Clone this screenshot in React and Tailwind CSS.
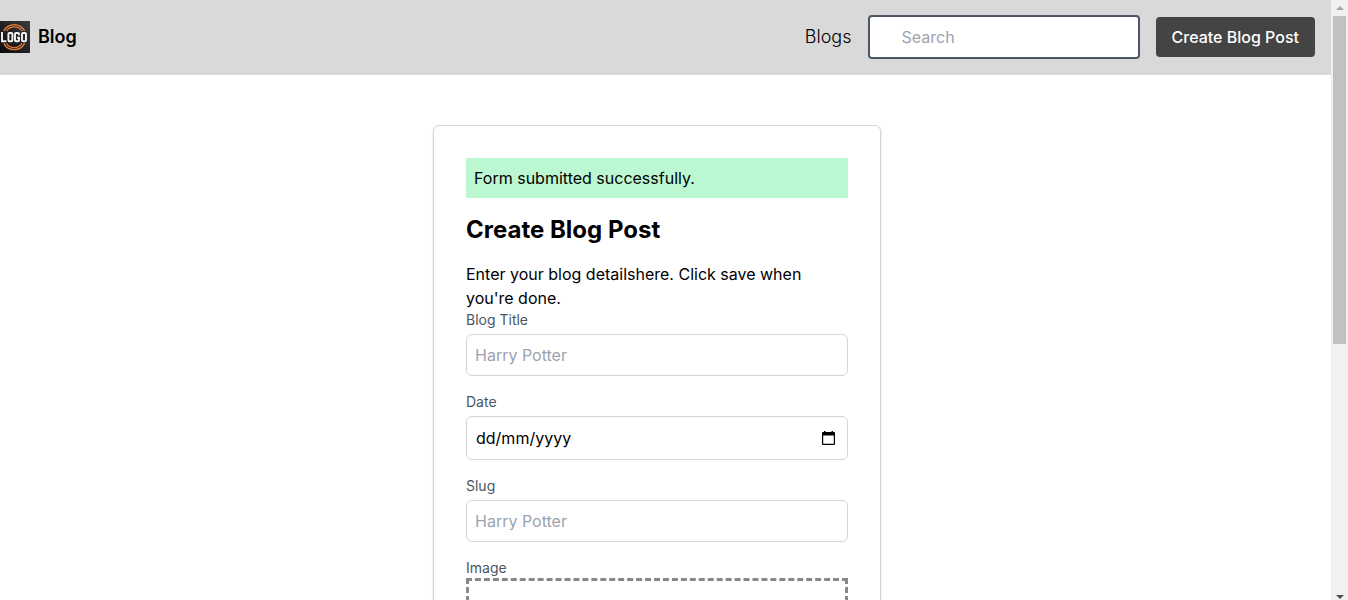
function Logo() {
  return (
    <svg viewBox="0 0 30 32" className="h-8 w-[30px]" role="img" aria-label="Blog logo">
      <defs>
        <linearGradient id="logo-bg" x1="1" y1="0" x2="0" y2="1">
          <stop offset="0" stopColor="#3b3b3e" />
          <stop offset="1" stopColor="#0b0b0d" />
        </linearGradient>
      </defs>
      <rect width="30" height="32" fill="url(#logo-bg)" />
      <g fill="none" stroke="#e07a3c">
        <path d="M3.8 10A11.8 11.8 0 0 1 24.6 10" strokeWidth="1.4" />
        <path d="M6.4 10A9.4 9.4 0 0 1 22 10" strokeWidth="1.2" />
        <path d="M3.8 22.4A11.8 11.8 0 0 0 24.6 22.4" strokeWidth="1.4" />
        <path d="M6.4 22.4A9.4 9.4 0 0 0 22 22.4" strokeWidth="1.2" />
      </g>
      <g fill="none" stroke="#f4f4f4" strokeWidth="1.9">
        <path d="M2 11V20.3H6.4" />
        <rect x="8.4" y="12" width="4" height="8.3" rx="1" />
        <path d="M19 14.2V13Q19 12 18 12H16Q15 12 15 13V19.3Q15 20.3 16 20.3H18Q19 20.3 19 19.3V16.7H17.2" />
        <rect x="22" y="12" width="4" height="8.3" rx="1" />
      </g>
    </svg>
  );
}

function Navbar() {
  return (
    <header className="flex h-[75px] items-center justify-between bg-[#d9d9d9] pr-4 pb-px">
      <a href="#home" className="flex items-center gap-2">
        <Logo />
        <span className="text-lg font-semibold">Blog</span>
      </a>
      <nav className="flex items-center gap-4">
        <a href="#blogs" className="text-lg font-light">Blogs</a>
        <input
          type="search"
          aria-label="Search"
          placeholder="Search"
          className="h-11 w-68 rounded border-2 border-[#4b5563] bg-white pr-4 pl-8 placeholder:text-[#9ca3af]"
        />
        <button type="button" className="h-10 rounded bg-[#444444] px-4 font-medium text-white">
          Create Blog Post
        </button>
      </nav>
    </header>
  );
}

function Field({ id, label, children }) {
  return (
    <div className="mb-4">
      <label htmlFor={id} className="block text-sm text-[#4b5563]">{label}</label>
      <div className="mt-1">{children}</div>
    </div>
  );
}

function TextField({ id, label }) {
  return (
    <Field id={id} label={label}>
      <input
        id={id}
        type="text"
        placeholder="Harry Potter"
        className="block w-full rounded-md border border-[#d1d5db] p-2 placeholder:text-[#9ca3af]"
      />
    </Field>
  );
}

function DateField() {
  return (
    <Field id="date" label="Date">
      <div className="flex h-11 items-center rounded-md border border-[#d1d5db] pr-3 pl-[9px]">
        <input
          id="date"
          type="text"
          placeholder="dd/mm/yyyy"
          className="min-w-0 flex-1 placeholder:text-black"
        />
        <button type="button" aria-label="Open calendar">
          <svg viewBox="0 0 13 14" className="block h-[14px] w-[13px]">
            <path d="M2 0H3.5V1H9.5V0H11V1H12Q13 1 13 2V13Q13 14 12 14H1Q0 14 0 13V2Q0 1 1 1H2ZM1.2 4.5V12.8H11.8V4.5Z" />
          </svg>
        </button>
      </div>
    </Field>
  );
}

function BlogForm() {
  return (
    <form className="w-full max-w-md rounded-md border border-[#d1d5db] p-8 shadow-sm">
      <p role="status" className="bg-[#bbf7d0] p-2">Form submitted successfully.</p>
      <h1 className="mt-4 text-2xl font-bold">Create Blog Post</h1>
      <p className="mt-4">Enter your blog detailshere. Click save when you're done.</p>
      <TextField id="title" label="Blog Title" />
      <DateField />
      <TextField id="slug" label="Slug" />
      <label htmlFor="image" className="block text-sm text-[#4b5563]">Image</label>
      <div className="h-40 border-3 border-dashed border-[#888888]">
        <input id="image" type="file" className="sr-only" />
      </div>
    </form>
  );
}

function ScrollRail() {
  return (
    <div aria-hidden="true" className="flex w-[17px] shrink-0 flex-col items-center bg-[#f1f1f1]">
      <div className="flex h-4 items-center">
        <svg viewBox="0 0 8 4" className="h-1 w-2" fill="#a3a3a3"><path d="M0 4L4 0L8 4Z" /></svg>
      </div>
      <div className="h-82 w-[13px] bg-[#c1c1c1]" />
      <div className="mt-auto flex h-4 items-end pb-px">
        <svg viewBox="0 0 8 4" className="h-1 w-2" fill="#505050"><path d="M0 0L4 4L8 0Z" /></svg>
      </div>
    </div>
  );
}

export default function App() {
  return (
    <div className="flex h-screen overflow-hidden bg-white font-['Inter',sans-serif] font-normal text-black">
      <div className="min-w-0 flex-1 overflow-hidden">
        <Navbar />
        <main className="flex justify-center pt-[50px] pr-[17px]">
          <BlogForm />
        </main>
      </div>
      <ScrollRail />
    </div>
  );
}
